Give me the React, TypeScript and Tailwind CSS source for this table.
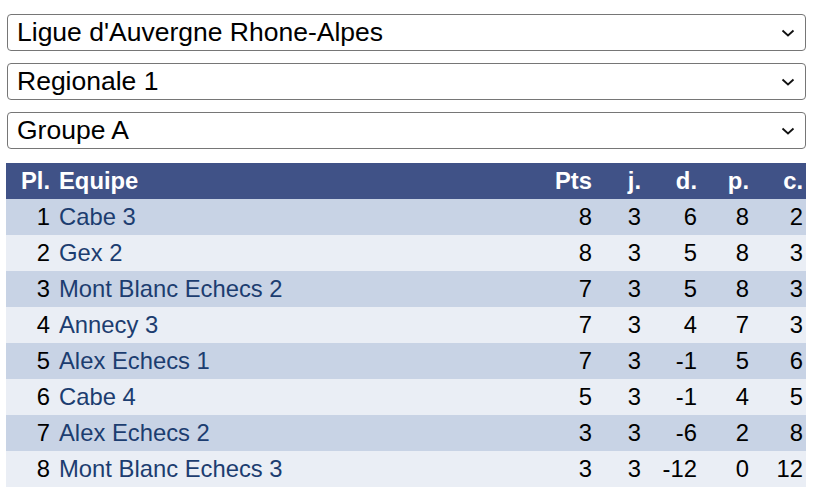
import React from "react";

const rows = [
  [1, "Cabe 3", 8, 3, 6, 8, 2],
  [2, "Gex 2", 8, 3, 5, 8, 3],
  [3, "Mont Blanc Echecs 2", 7, 3, 5, 8, 3],
  [4, "Annecy 3", 7, 3, 4, 7, 3],
  [5, "Alex Echecs 1", 7, 3, -1, 5, 6],
  [6, "Cabe 4", 5, 3, -1, 4, 5],
  [7, "Alex Echecs 2", 3, 3, -6, 2, 8],
  [8, "Mont Blanc Echecs 3", 3, 3, -12, 0, 12],
];

function Select({ label }: { label: string }) {
  return (
    <div className="flex h-[37px] w-[799px] items-center justify-between rounded-[4px] border border-[#767676] bg-white pl-[9px] pr-[9px]">
      <span className="text-[26.5px] leading-none text-black">{label}</span>
      <svg width="14" height="8" viewBox="0 0 14 8" fill="none" className="mr-[1px]">
        <path d="M1.5 1.5L7 6.5L12.5 1.5" stroke="#111" strokeWidth="1.8" />
      </svg>
    </div>
  );
}

export default function App() {
  return (
    <div
      className="bg-white pl-[7px] pt-[14px] pb-[9px]"
      style={{ fontFamily: '"Liberation Sans", Arial, sans-serif' }}
    >
      <div className="flex flex-col gap-[12px]">
        <Select label="Ligue d'Auvergne Rhone-Alpes" />
        <Select label="Regionale 1" />
        <Select label="Groupe A" />
      </div>
      <table className="-ml-[1px] mt-[14px] w-[800px] border-collapse text-[23.8px] leading-none">
        <thead>
          <tr className="h-[36px] bg-[#405287] font-bold text-white">
            <th className="w-[48px] pl-[15px] text-left font-bold">Pl.</th>
            <th className="pl-[5px] text-left font-bold">Equipe</th>
            <th className="w-[52px] pr-[5px] text-right font-bold">Pts</th>
            <th className="w-[48px] pr-[4px] text-right font-bold">j.</th>
            <th className="w-[56px] pr-[4px] text-right font-bold">d.</th>
            <th className="w-[52px] pr-[4px] text-right font-bold">p.</th>
            <th className="w-[53px] pr-[3px] text-right font-bold">c.</th>
          </tr>
        </thead>
        <tbody>
          {rows.map((r, i) => (
            <tr
              key={i}
              className={i % 2 === 0 ? "h-[36px] bg-[#c8d3e5]" : "h-[36px] bg-[#eaeef5]"}
            >
              <td className="pr-[4px] text-right text-black">{r[0]}</td>
              <td className="pl-[5px] text-left text-[#1c3d70]">{r[1]}</td>
              <td className="pr-[5px] text-right text-black">{r[2]}</td>
              <td className="pr-[4px] text-right text-black">{r[3]}</td>
              <td className="pr-[4px] text-right text-black">{r[4]}</td>
              <td className="pr-[4px] text-right text-black">{r[5]}</td>
              <td className="pr-[3px] text-right text-black">{r[6]}</td>
            </tr>
          ))}
        </tbody>
      </table>
    </div>
  );
}
